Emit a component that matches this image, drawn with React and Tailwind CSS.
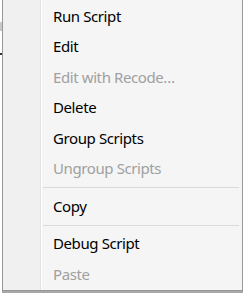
export default function App() {
  const items = [
    { t: "Run Script" },
    { t: "Edit" },
    { t: "Edit with Recode…", d: true },
    { t: "Delete" },
    { t: "Group Scripts" },
    { t: "Ungroup Scripts", d: true },
    { sep: true },
    { t: "Copy" },
    { sep: true },
    { t: "Debug Script" },
    { t: "Paste", d: true },
  ];
  return (
    <div className="w-[243px] h-[293px] bg-white flex overflow-hidden" style={{ fontFamily: '"Noto Sans", sans-serif' }}>
      <div className="w-[2px] h-full flex flex-col bg-white">
        <div className="h-[22px]" />
        <div className="h-[9px] bg-[#c8c8c8]" />
        <div className="h-[22px]" />
        <div className="h-[2px] bg-[#333]" />
      </div>
      <div className="w-[241px] h-full flex flex-col">
        <div className="h-[291px] flex bg-[#f5f5f5] border-l border-r border-b border-[#979797]">
          <div className="w-[37px] bg-[#f0f0f0]" />
          <div className="w-[1px] bg-[#e2e3e3]" />
          <div className="w-[1px] bg-white" />
          <div className="flex-1 flex flex-col pt-[1px]">
            {items.map((it, i) =>
              it.sep ? (
                <div key={i} className="h-[7px] flex flex-col justify-center pl-[1px] pr-[3px]">
                  <div className="h-[1px] bg-[#dadada]" />
                </div>
              ) : (
                <div
                  key={i}
                  className={`h-[30.5px] flex items-center pl-[11px] text-[15px] tracking-[-0.4px] leading-none ${it.d ? "text-[#a0a0a0]" : "text-black"}`}
                >
                  {it.t}
                </div>
              )
            )}
          </div>
        </div>
        <div className="h-[2px] bg-[#a8a8a8]" />
      </div>
    </div>
  );
}
